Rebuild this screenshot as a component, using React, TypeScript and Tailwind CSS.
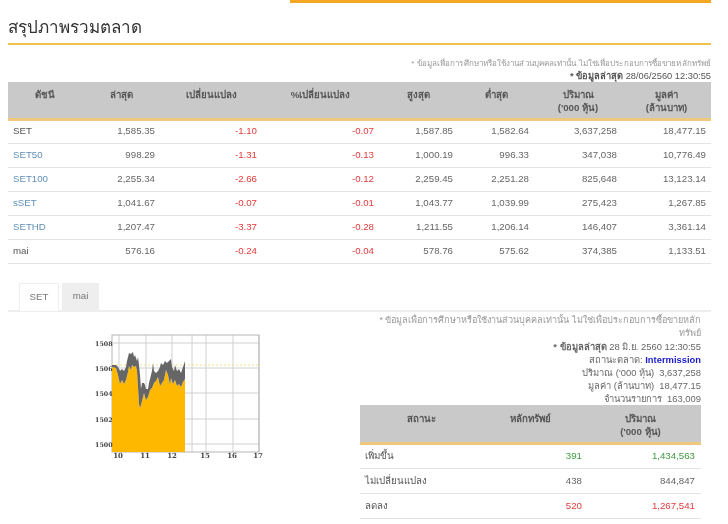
const font = { fontFamily: '"Liberation Sans", "Noto Sans", "Noto Sans CJK SC", sans-serif' };

const rows = [
  ["SET", "1,585.35", "-1.10", "-0.07", "1,587.85", "1,582.64", "3,637,258", "18,477.15"],
  ["SET50", "998.29", "-1.31", "-0.13", "1,000.19", "996.33", "347,038", "10,776.49"],
  ["SET100", "2,255.34", "-2.66", "-0.12", "2,259.45", "2,251.28", "825,648", "13,123.14"],
  ["sSET", "1,041.67", "-0.07", "-0.01", "1,043.77", "1,039.99", "275,423", "1,267.85"],
  ["SETHD", "1,207.47", "-3.37", "-0.28", "1,211.55", "1,206.14", "146,407", "3,361.14"],
  ["mai", "576.16", "-0.24", "-0.04", "578.76", "575.62", "374,385", "1,133.51"],
];

const widths = ["w-[74px]", "w-[78px]", "w-[102px]", "w-[117px]", "w-[79px]", "w-[76px]", "w-[88px]", "w-[89px]"];

const hi: [number, number][] = [
  [112, 366], [116, 366], [118, 368], [120, 372], [122, 370], [124, 372], [126, 368], [127, 362], [128, 358],
  [129, 354], [131, 355], [133, 353], [134, 358], [135, 356], [137, 362], [138, 358], [139, 366], [140, 376],
  [141, 390], [142, 384], [144, 384], [145, 386], [146, 390], [148, 390], [149, 384], [151, 376], [152, 372],
  [153, 364], [154, 372], [156, 374], [158, 372], [160, 368], [161, 364], [163, 366], [165, 362], [167, 364],
  [169, 362], [171, 360], [172, 368], [174, 372], [175, 366], [177, 372], [179, 370], [181, 374], [183, 368], [185, 362],
];
const lo: [number, number][] = [
  [185, 380], [183, 383], [181, 388], [179, 385], [177, 387], [175, 381], [173, 385], [171, 379], [170, 386],
  [168, 376], [166, 371], [164, 381], [162, 384], [160, 387], [158, 378], [156, 382], [154, 384], [152, 389],
  [150, 391], [148, 398], [146, 401], [144, 394], [142, 402], [141, 406], [140, 409], [139, 405], [138, 388],
  [137, 372], [136, 367], [134, 368], [132, 366], [131, 371], [129, 367], [128, 373], [126, 381], [124, 385],
  [122, 381], [120, 385], [118, 376], [116, 369], [112, 368],
];
const pts = (a: [number, number][]) => a.map(([x, y]) => `${x - 80},${y - 330}`).join(" ");
const gridV = [119, 146, 172, 192, 206, 233, 259];
const gridH = [344, 369, 394, 420, 445];

function Chart() {
  return (
    <svg width="190" height="135" className="block" style={{ fontFamily: '"DejaVu Serif", serif' }}>
      {gridV.map((x) => (
        <line key={x} x1={x - 80} x2={x - 80} y1={6} y2={123} stroke="#d0d0d0" />
      ))}
      {gridH.map((y) => (
        <line key={y} x1={32} x2={179} y1={y - 330} y2={y - 330} stroke="#d0d0d0" />
      ))}
      <rect x="32" y="6" width="147" height="117" fill="none" stroke="#b5b5b5" />
      <line x1="32" x2="179" y1="36" y2="36" stroke="#f6dc80" strokeDasharray="2 2" />
      <polygon points={`32,123 ${pts(lo.slice().reverse())} 105,123`} fill="#ffb800" />
      <polygon points={pts([...hi, ...lo])} fill="#666666" />
      {["1508", "1506", "1504", "1502", "1500"].map((t, i) => (
        <text key={t} x="15" y={gridH[i] - 330 + 2.5} fontSize="6.3" fontWeight="bold" fill="#444">{t}</text>
      ))}
      {[["10", 118], ["11", 145], ["12", 172], ["15", 205], ["16", 232], ["17", 258]].map(([t, x]) => (
        <text key={t as string} x={(x as number) - 80} y="129" fontSize="7" fontWeight="bold" textAnchor="middle" fill="#444">{t}</text>
      ))}
    </svg>
  );
}

export default function App() {
  return (
    <div className="w-[728px] h-[524px] overflow-hidden bg-white text-[9.7px] text-[#555] blur-[0.4px]" style={font}>
      <div className="ml-[290px] mr-[17px] h-[3px] bg-[#f5a623]" />
      <div className="ml-[8px] mr-[17px]">
        <h1 className="h-[42px] pt-[12px] border-b-2 border-[#f0c14b] text-[17px] leading-[26px] text-[#333] font-normal">สรุปภาพรวมตลาด</h1>
        <p className="mt-[13px] text-right text-[8px] tracking-[0.08px] leading-[12px] text-[#999]">* ข้อมูลเพื่อการศึกษาหรือใช้งานส่วนบุคคลเท่านั้น ไม่ใช่เพื่อประกอบการซื้อขายหลักทรัพย์</p>
        <p className="text-right text-[9.3px] leading-[12px] text-[#555]"><b>* ข้อมูลล่าสุด</b> 28/06/2560 12:30:55</p>
        <table className="w-[703px] table-fixed border-collapse">
          <thead>
            <tr className="h-[37px] bg-[#c9c9c9] border-b-[3px] border-[#eec87c] text-[#555] align-top">
              {["ดัชนี", "ล่าสุด", "เปลี่ยนแปลง", "%เปลี่ยนแปลง", "สูงสุด", "ต่ำสุด", "ปริมาณ\n('000 หุ้น)", "มูลค่า\n(ล้านบาท)"].map((h, i) => (
                <th key={h} className={`${widths[i]} whitespace-pre-line pt-[6px] leading-[13px] font-bold text-center`}>{h}</th>
              ))}
            </tr>
          </thead>
          <tbody>
            {rows.map((r) => (
              <tr key={r[0]} className="h-[24px] border-b border-[#e3e3e3]">
                {r.map((c, i) => (
                  <td
                    key={i}
                    className={
                      i === 0
                        ? `pl-[5px] ${r[0] === "SET" || r[0] === "mai" ? "text-[#555]" : "text-[#5f8fb8]"}`
                        : `text-right pr-[5px] ${i === 2 || i === 3 ? "text-[#e23b3b]" : "text-[#666]"}`
                    }
                  >
                    {c}
                  </td>
                ))}
              </tr>
            ))}
          </tbody>
        </table>
        <div className="mt-[19px] flex gap-[3px] pl-[11px] border-b-2 border-[#eeeeee] h-[29px]">
          <div className="w-[40px] h-[28px] bg-white border border-b-0 border-[#eeeeee] flex items-center justify-center text-[#777]">SET</div>
          <div className="w-[37px] h-[27px] bg-[#eeeeee] flex items-center justify-center text-[#777]">mai</div>
        </div>
      </div>
      <div className="flex">
        <div className="ml-[80px] mt-[17px] w-[190px] shrink-0"><Chart /></div>
        <div className="ml-[90px] w-[341px] shrink-0">
          <div className="mt-[2px] text-right text-[9.4px] leading-[13px] text-[#666]">
            <p className="ml-auto w-[326px] text-[9.1px] text-[#999]">* ข้อมูลเพื่อการศึกษาหรือใช้งานส่วนบุคคลเท่านั้น ไม่ใช่เพื่อประกอบการซื้อขายหลักทรัพย์</p>
            <p><b>* ข้อมูลล่าสุด</b> 28 มิ.ย. 2560 12:30:55</p>
            <p>สถานะตลาด: <b className="text-[#1a1acc]">Intermission</b></p>
            <p>ปริมาณ ('000 หุ้น)&nbsp; 3,637,258</p>
            <p>มูลค่า (ล้านบาท)&nbsp; 18,477.15</p>
            <p>จำนวนรายการ&nbsp; 163,009</p>
          </div>
          <table className="w-[341px] table-fixed border-collapse">
            <thead>
              <tr className="h-[39px] bg-[#c9c9c9] border-b-[3px] border-[#eec87c] align-top text-[#555]">
                <th className="w-[122px] pt-[7px] leading-[13px] font-bold">สถานะ</th>
                <th className="w-[102px] pt-[7px] pr-[5px] leading-[13px] font-bold">หลักทรัพย์</th>
                <th className="pt-[7px] pr-[4px] leading-[13px] font-bold whitespace-pre-line">{"ปริมาณ\n('000 หุ้น)"}</th>
              </tr>
            </thead>
            <tbody>
              {[
                ["เพิ่มขึ้น", "391", "1,434,563", "text-[#3f9a3f]"],
                ["ไม่เปลี่ยนแปลง", "438", "844,847", "text-[#666]"],
                ["ลดลง", "520", "1,267,541", "text-[#e23b3b]"],
              ].map((r) => (
                <tr key={r[0]} className="h-[25px] border-b border-[#e3e3e3]">
                  <td className="pl-[5px] text-[#555]">{r[0]}</td>
                  <td className={`text-right pr-[2px] ${r[3]}`}>{r[1]}</td>
                  <td className={`text-right pr-[6px] ${r[3]}`}>{r[2]}</td>
                </tr>
              ))}
            </tbody>
          </table>
        </div>
      </div>
    </div>
  );
}
